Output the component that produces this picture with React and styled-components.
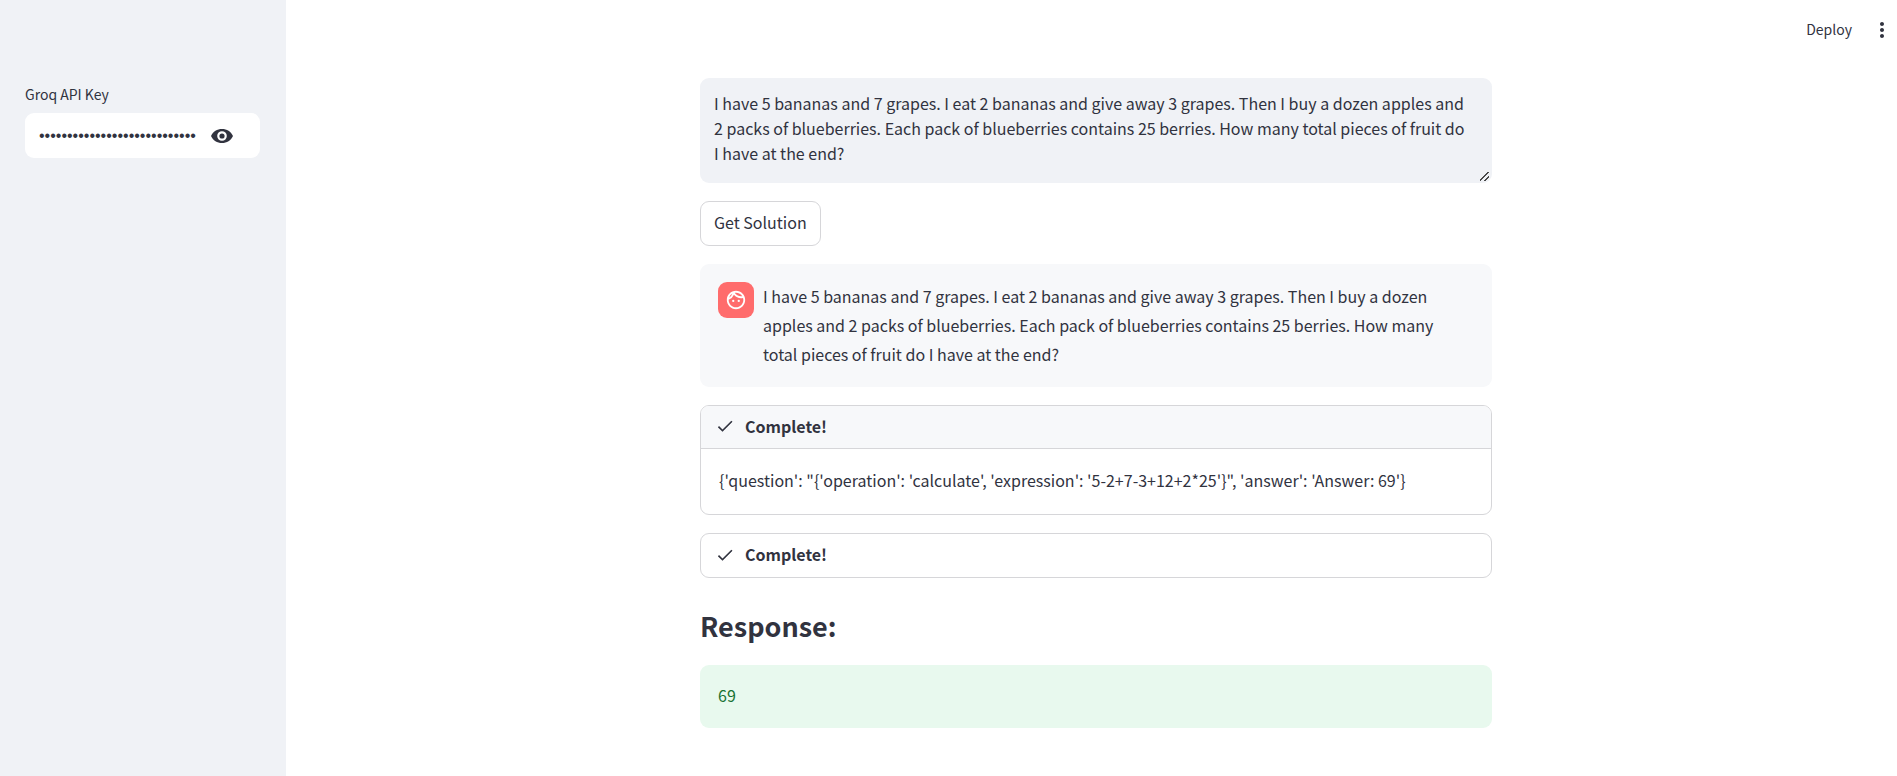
import React, { useState } from "react";
import styled, { createGlobalStyle } from "styled-components";
import { MdCheck, MdMoreVert, MdOutlineFace } from "react-icons/md";

const GlobalStyle = createGlobalStyle`
  *, *::before, *::after { box-sizing: border-box; }
  body {
    margin: 0;
    background: #ffffff;
    color: #31333f;
    font-family: "Source Sans Pro", "Noto Sans CJK SC", sans-serif;
    font-size: 16px;
    line-height: 29px;
  }
  button, input, textarea { font: inherit; color: inherit; }
`;

const Page = styled.div`
  display: flex;
  min-height: 100vh;
`;

const Sidebar = styled.aside`
  flex: 0 0 286px;
  min-width: 0;
  padding: 80px 26px 0 25px;
  background: #f0f2f6;
`;

const FieldLabel = styled.label`
  display: block;
  margin-bottom: 5px;
  font-size: 14px;
  line-height: 28px;
`;

const PasswordField = styled.div`
  display: flex;
  align-items: center;
  height: 45px;
  padding: 0 14px;
  border-radius: 9px;
  background: #ffffff;
`;

const PasswordInput = styled.input`
  flex: 1;
  width: 100%;
  min-width: 0;
  padding: 0;
  border: 0;
  outline: 0;
  background: transparent;
  font-family: "Liberation Sans", sans-serif;
`;

const IconButton = styled.button`
  display: flex;
  padding: 0;
  border: 0;
  background: transparent;
  cursor: pointer;
`;

const RevealButton = styled(IconButton)`
  margin: 0 12px;
`;

const Main = styled.main`
  flex: 1;
  min-width: 0;
  padding-left: 9px;
`;

const Toolbar = styled.header`
  display: flex;
  align-items: center;
  justify-content: flex-end;
  gap: 18px;
  height: 60px;
  padding-right: 3px;
`;

const DeployButton = styled.button`
  padding: 0 0 2px;
  border: 0;
  background: transparent;
  font-size: 14px;
  cursor: pointer;
`;

const Content = styled.div`
  display: flex;
  flex-direction: column;
  align-items: stretch;
  gap: 18px;
  max-width: 792px;
  margin: 0 auto;
  padding: 18px 0 36px;
`;

const Question = styled.textarea`
  display: block;
  width: 100%;
  height: 105px;
  padding: 13px 24px 13px 14px;
  border: 0;
  border-radius: 9px;
  outline: 0;
  background: #f0f2f6;
  line-height: 25px;
  resize: vertical;

  &::-webkit-resizer {
    background: linear-gradient(
        135deg,
        transparent 42%,
        #4a4a4a 42% 52%,
        transparent 52% 69%,
        #4a4a4a 69% 79%,
        transparent 79%
      )
      3px 4px / 9px 9px no-repeat;
  }
`;

const SubmitButton = styled.button`
  align-self: flex-start;
  height: 45px;
  padding: 0 13px 2px;
  border: 1px solid #d6d6d9;
  border-radius: 9px;
  background: #ffffff;
  cursor: pointer;
`;

const ChatMessage = styled.article`
  display: flex;
  align-items: flex-start;
  gap: 9px;
  padding: 18px;
  border-radius: 9px;
  background: #f7f8fa;
`;

const Avatar = styled.span`
  display: flex;
  flex: 0 0 36px;
  align-items: center;
  justify-content: center;
  height: 36px;
  border-radius: 9px;
  background: #ff6c6c;
  color: #ffffff;
`;

const Paragraph = styled.p`
  flex: 1;
  margin: 0;
  padding-right: 9px;
`;

const Status = styled.details`
  overflow: hidden;
  border: 1px solid #d6d6d9;
  border-radius: 9px;
`;

const StatusSummary = styled.summary`
  display: flex;
  align-items: center;
  gap: 10px;
  height: 43px;
  padding: 0 14px 2px;
  font-weight: 600;
  list-style: none;
  cursor: pointer;

  details[open] > & {
    border-bottom: 1px solid #d6d6d9;
    background: #f7f8fa;
  }
`;

const StatusBody = styled.div`
  padding: 17px 18px 19px;
`;

const Heading = styled.h2`
  margin: 0;
  padding: 11px 0 2px;
  font-size: 27px;
  font-weight: 600;
  line-height: 38px;
`;

const Success = styled.div`
  padding: 16px 18px 18px;
  border-radius: 9px;
  background: #e8f9ee;
  color: #177233;
`;

const QUESTION =
  "I have 5 bananas and 7 grapes. I eat 2 bananas and give away 3 grapes. Then I buy a dozen apples and 2 packs of blueberries. Each pack of blueberries contains 25 berries. How many total pieces of fruit do I have at the end?";

const STEP_RESULT =
  "{'question': \"{'operation': 'calculate', 'expression': '5-2+7-3+12+2*25'}\", 'answer': 'Answer: 69'}";

function EyeIcon() {
  return (
    <svg width="24" height="24" viewBox="0 0 24 24" aria-hidden="true">
      <path
        fill="currentColor"
        fillRule="evenodd"
        d="M1 12C3 7.600 7.200 5 12 5s9 2.600 11 7c-2 4.400-6.200 7-11 7S3 16.400 1 12Zm11-4.800a4.800 4.800 0 1 0 0 9.600 4.800 4.800 0 0 0 0-9.600Zm0 2.200a2.600 2.600 0 1 1 0 5.200 2.600 2.600 0 0 1 0-5.200Z"
      />
    </svg>
  );
}

function StatusStep({ label, open, children }) {
  return (
    <Status open={open}>
      <StatusSummary>
        <MdCheck size={20} aria-hidden="true" />
        {label}
      </StatusSummary>
      {children && <StatusBody>{children}</StatusBody>}
    </Status>
  );
}

export default function App() {
  const [apiKey, setApiKey] = useState("x".repeat(28));
  const [revealed, setRevealed] = useState(false);
  const [question, setQuestion] = useState(QUESTION);

  return (
    <>
      <GlobalStyle />
      <Page>
        <Sidebar>
          <FieldLabel htmlFor="api-key">Groq API Key</FieldLabel>
          <PasswordField>
            <PasswordInput
              id="api-key"
              type={revealed ? "text" : "password"}
              value={apiKey}
              onChange={(e) => setApiKey(e.target.value)}
            />
            <RevealButton
              type="button"
              aria-label="Show password text"
              onClick={() => setRevealed(!revealed)}
            >
              <EyeIcon />
            </RevealButton>
          </PasswordField>
        </Sidebar>
        <Main>
          <Toolbar>
            <DeployButton type="button">Deploy</DeployButton>
            <IconButton type="button" aria-label="Main menu">
              <MdMoreVert size={24} />
            </IconButton>
          </Toolbar>
          <Content>
            <Question
              aria-label="Enter your question"
              spellCheck={false}
              value={question}
              onChange={(e) => setQuestion(e.target.value)}
            />
            <SubmitButton type="button">Get Solution</SubmitButton>
            <ChatMessage>
              <Avatar>
                <MdOutlineFace size={22} aria-hidden="true" />
              </Avatar>
              <Paragraph>{QUESTION}</Paragraph>
            </ChatMessage>
            <StatusStep label="Complete!" open>
              {STEP_RESULT}
            </StatusStep>
            <StatusStep label="Complete!" />
            <Heading>Response:</Heading>
            <Success role="status">69</Success>
          </Content>
        </Main>
      </Page>
    </>
  );
}
